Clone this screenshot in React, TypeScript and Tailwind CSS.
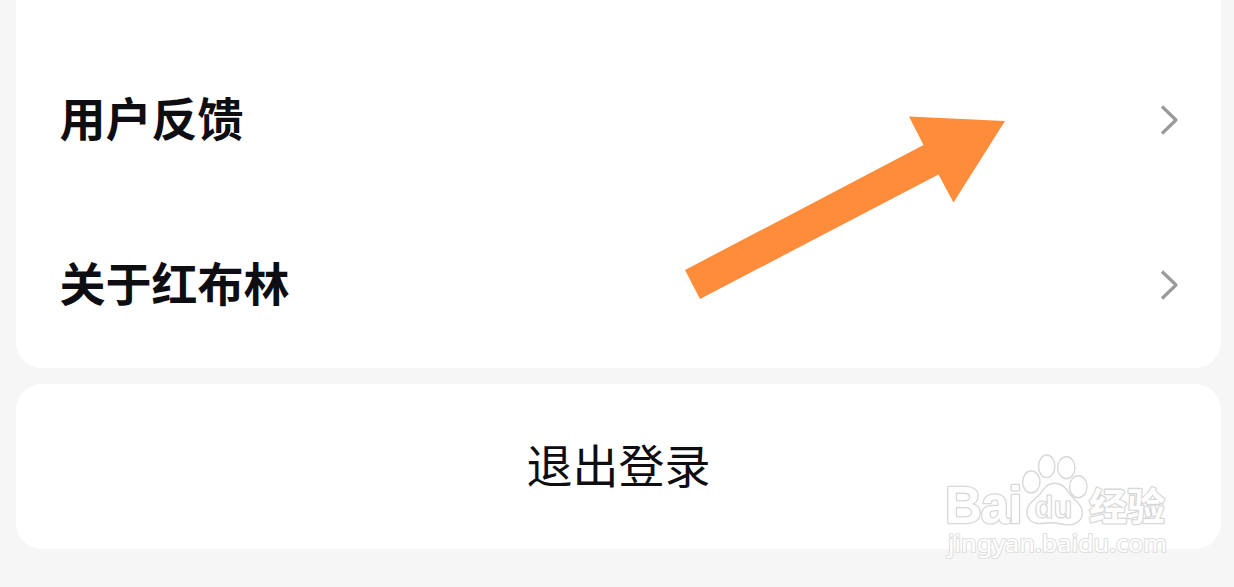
import React from 'react'

const menuItems = [
  { id: 'feedback', label: '用户反馈' },
  { id: 'about', label: '关于红布林' }
]

export default function App() {
  return (
    <main className="relative flex h-[587px] w-[1234px] flex-col gap-4 overflow-hidden bg-[#f6f6f6] pl-4 pr-[13px] font-['Noto_Sans_CJK_SC',sans-serif]">
      {/* Settings list */}
      <section className="h-[368px] shrink-0 rounded-b-[26px] bg-white pt-[37px]">
        {menuItems.map((item) => (
          <MenuRow key={item.id} label={item.label} />
        ))}
      </section>

      {/* Logout */}
      <button className="flex h-[165px] shrink-0 items-center justify-center rounded-[26px] bg-white pb-2 text-[46px] leading-none text-[#0e0e12]">
        退出登录
      </button>

      <Arrow />
      <Watermark />
    </main>
  )
}

function MenuRow({ label }: { label: string }) {
  return (
    <div className="flex h-[165px] items-center justify-between pl-[43.5px] pr-[41px]">
      <span className="pb-2 text-[46px] font-bold leading-none text-[#0e0e12]">{label}</span>
      <svg className="h-8 w-5" viewBox="0 0 20 32" fill="none" stroke="#9a9a9a" strokeWidth="3.2" strokeLinejoin="round">
        <path d="M2 2.5L16 16L2 29.5" />
      </svg>
    </div>
  )
}

function Arrow() {
  return (
    <svg className="absolute left-[680px] top-[110px] h-[195px] w-[330px]" viewBox="680 110 330 195">
      <path d="M685 270L923.5 145L909 116.500L1005 121L953.500 202.500L938.500 174.500L700 299Z" fill="#ff8c3a" />
    </svg>
  )
}

function Watermark() {
  return (
    <svg
      className="absolute left-[934px] top-[440px] h-[130px] w-[250px]"
      viewBox="934 440 250 130"
      fill="#ffffff"
      stroke="#d8d8d8"
      strokeWidth="1.4"
      strokeLinejoin="round"
    >
      <text x="945" y="522.500" fontSize="51" fontWeight="700" strokeWidth="2.600" paintOrder="stroke" letterSpacing="-1" fontFamily="Liberation Sans, Arial, sans-serif">Bai</text>

      {/* Paw */}
      <ellipse cx="1031.300" cy="482" rx="8.700" ry="11" />
      <ellipse cx="1046.700" cy="466.300" rx="8.200" ry="11.300" />
      <ellipse cx="1066.300" cy="467.700" rx="8.700" ry="11" />
      <ellipse cx="1078.300" cy="486.700" rx="8.700" ry="11" />
      <path d="M1054.500 483.300C1047 483.300 1043.500 489 1040 494C1036 499 1027 503 1027 512C1027 520 1033 524.300 1041 523.500C1048 522.500 1054 522 1060 523.800C1071 526.500 1082 524 1082.300 513C1082.300 504 1074 500 1070 494C1066 488 1062 483.300 1054.500 483.300Z" />
      <text x="1034.500" y="518" fontSize="31" fontWeight="700" strokeWidth="1.200" textLength="38" lengthAdjust="spacingAndGlyphs" fontFamily="Liberation Sans, Arial, sans-serif">du</text>

      <text x="1089" y="520" fontSize="38" fontWeight="700" strokeWidth="2.600" paintOrder="stroke" fontFamily="Noto Sans CJK SC, sans-serif">经验</text>
      <text x="948" y="552" fontSize="24" strokeWidth="2.200" stroke="#e0e0e0" paintOrder="stroke" textLength="219" lengthAdjust="spacingAndGlyphs" fontFamily="Noto Sans, sans-serif">
        jingyan.baidu.com
      </text>
    </svg>
  )
}
